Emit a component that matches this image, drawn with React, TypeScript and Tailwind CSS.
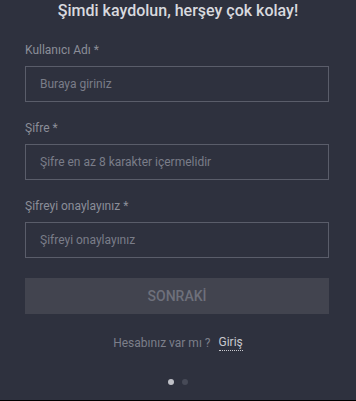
const fields = [
  { label: "Kullanıcı Adı *", placeholder: "Buraya giriniz", type: "text" },
  { label: "Şifre *", placeholder: "Şifre en az 8 karakter içermelidir", type: "password" },
  { label: "Şifreyi onaylayınız *", placeholder: "Şifreyi onaylayınız", type: "password" },
];

export default function App() {
  return (
    <div className="w-[356px] h-[401px] bg-[#2e313e] border-b border-black font-['Roboto',sans-serif] overflow-hidden">
      <h1 className="text-center text-[16px] leading-[22px] font-medium text-[#d8d9de]">
        Şimdi kaydolun, herşey çok kolay!
      </h1>

      <form className="pl-[25px] pr-[27px] pt-[20px] flex flex-col gap-[18px]">
        {fields.map(f => (
          <div key={f.label}>
            <label className="block text-[12px] leading-4 mb-2 text-[#8b8e99]">{f.label}</label>
            <input
              type={f.type}
              placeholder={f.placeholder}
              className="block w-full h-9 px-[14px] bg-transparent border border-[#5a5d6a] text-[12px] text-[#d8d9de] placeholder:text-[#7a7d89] outline-none"
            />
          </div>
        ))}

        <button
          type="button"
          className="mt-[2px] h-9 w-full bg-[#42444f] text-[14px] font-medium text-[#6e707b]"
        >
          SONRAKİ
        </button>
      </form>

      <div className="mt-[21px] flex justify-center items-center gap-2 text-[12px] leading-4">
        <span className="text-[#7c7f8a]">Hesabınız var mı ?</span>
        <a className="text-[#c8c9cf] border-b border-dotted border-[#c8c9cf] leading-[15px]">Giriş</a>
      </div>

      <div className="mt-[28px] flex justify-center gap-[8px]">
        <span className="w-[6px] h-[6px] rounded-full bg-[#bfc0c7]" />
        <span className="w-[6px] h-[6px] rounded-full bg-[#474a57]" />
      </div>
    </div>
  );
}
